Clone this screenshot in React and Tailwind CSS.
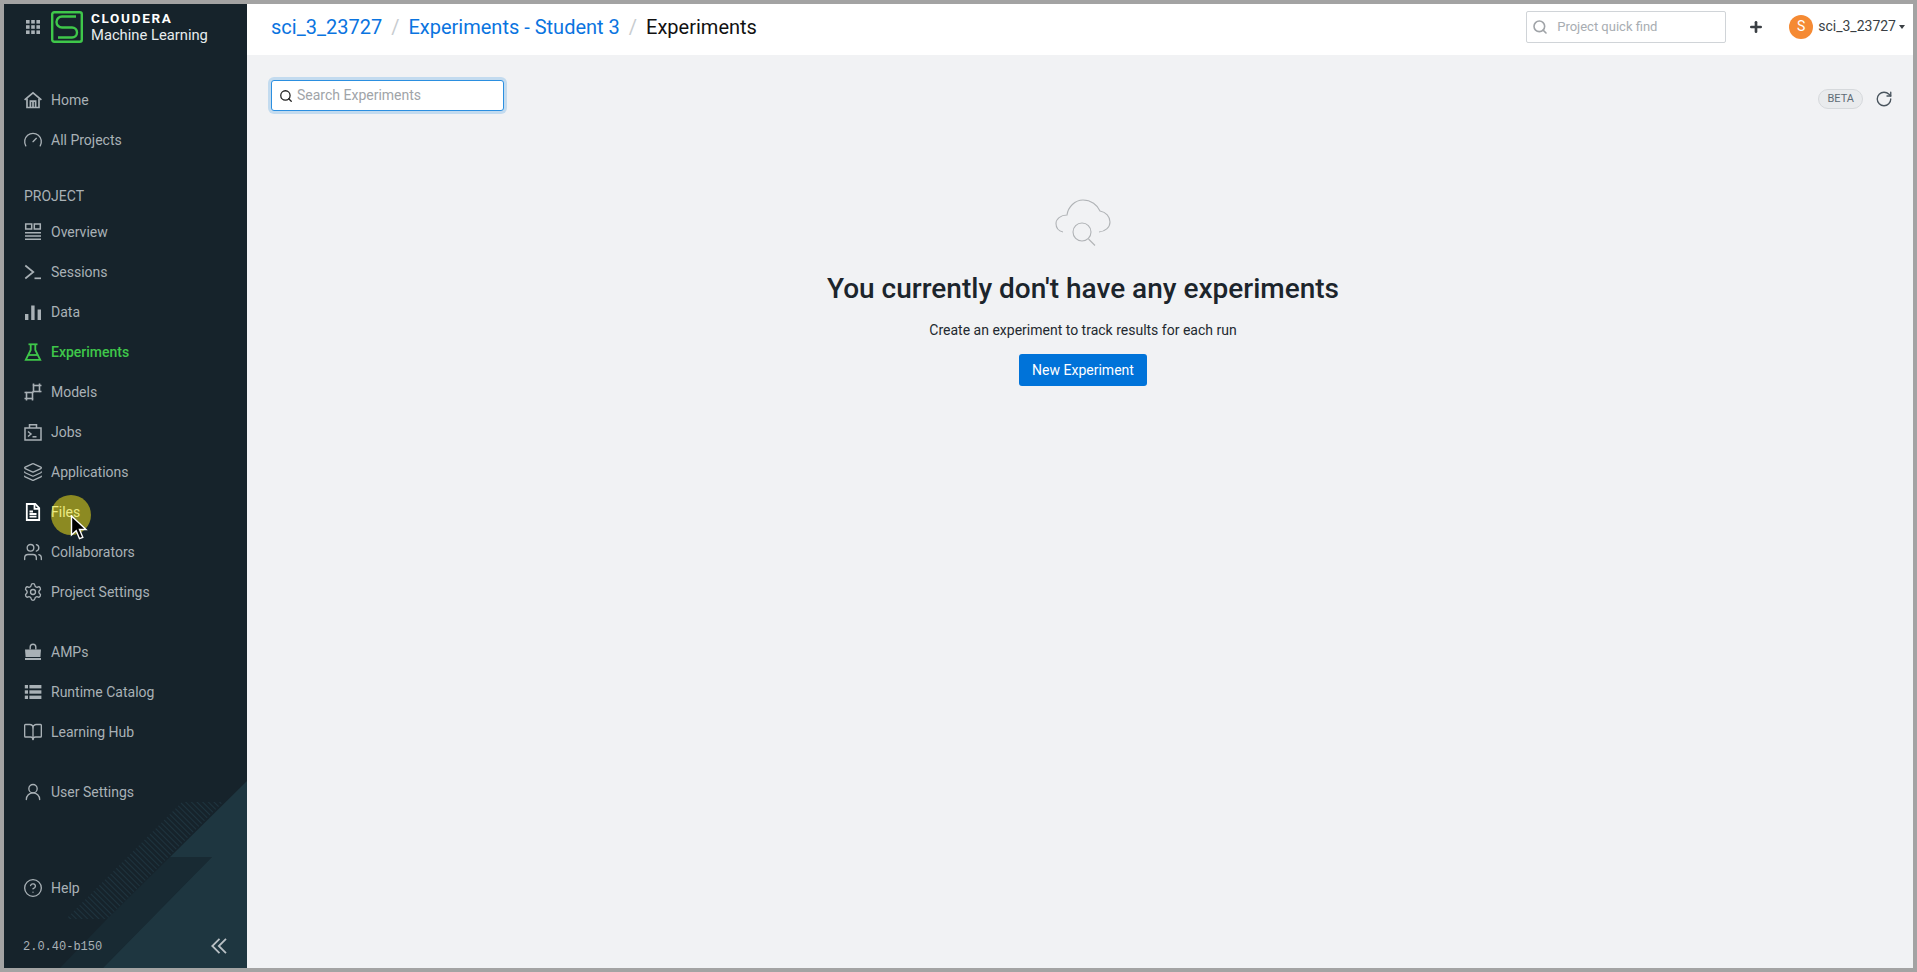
import { Search, Plus, RotateCw, Settings, CircleHelp, Gauge, UserRound, Users, BookOpen, Layers } from 'lucide-react'

// Line icons that lucide has no close match for
function Ico({ children, fill = 'none', sw = 1.7 }) {
  return (
    <svg className="shrink-0" width="18" height="18" viewBox="0 0 18 18" fill={fill} stroke={fill === 'none' ? 'currentColor' : 'none'} strokeWidth={sw}>
      {children}
    </svg>
  )
}

const HomeIcon = () => (
  <Ico><path d="M.6 8.8 9 1.800l8.400 7" /><path d="M3 7.500V16.500h12V7.500" /><path d="M6.400 16.500v-6.300h5.200v6.300" /><path d="M9 10.200v6.300" /></Ico>
)
const OverviewIcon = () => (
  <Ico sw={1.5}><rect x="1.700" y="1" width="6" height="5" /><rect x="10.300" y="1" width="6" height="5" /><path d="M1 9.800h16M1 13h16M1 16.200h16" /></Ico>
)
const SessionsIcon = () => (
  <Ico><path d="m1.300 2.500 8 6.500-8 6.500" /><path d="M10.500 15.300H17" /></Ico>
)
const DataIcon = () => (
  <Ico fill="currentColor"><rect x="1" y="11" width="3.400" height="6" /><rect x="7.200" y="2.500" width="3.400" height="14.500" /><rect x="13.600" y="6.500" width="3.400" height="10.500" /></Ico>
)
const FlaskIcon = () => (
  <Ico sw={1.800}><path d="M4.500 1.300h9" /><path d="M6.700 1.300v5.700L1.800 16.800h14.400L11.300 7V1.300" /><path d="M4.300 12h9.400" /></Ico>
)
const ModelsIcon = () => (
  <Ico sw={1.600}>
    <rect x="2.500" y="9.500" width="6" height="6" /><rect x="9.500" y="2.500" width="6" height="6" />
    <path d="M8.500 9.500 9.500 8.500M.5 9.500h2M.5 15.500h2M2.500 17.500v-2M8.500 17.500v-2M9.500 .5v2M15.500 .5v2M15.500 8.500h2M15.500 2.500h2" />
  </Ico>
)
const JobsIcon = () => (
  <Ico sw={1.500}><rect x="1" y="5" width="16" height="12" /><path d="M5.500 5V1.800h7V5" /><path d="m4 8.500 3 2.500-3 2.500" /><path d="M8.500 13.800h4" /></Ico>
)
const FilesIcon = () => (
  <svg className="shrink-0" width="18" height="18" viewBox="0 0 18 18" fill="none" stroke="#fff" strokeWidth="1.800">
    <path d="M2.800 1h8.400l4 4.200V17H2.800z" /><path d="M10.500 1v4.800h4.700" /><path d="M5.500 8.500h3.500M5.500 11h7M5.500 13.700h7" />
  </svg>
)
const AmpsIcon = () => (
  <Ico fill="currentColor">
    <path d="M1 6.500h16l-.6 7.500H1.600z" /><rect x="1" y="15" width="16" height="2" />
    <path d="M5.500 6.500V4a3.500 3.500 0 0 1 7 0v2.500h-1.400V4a2.100 2.100 0 0 0-4.200 0v2.500z" />
  </Ico>
)
const CatalogIcon = () => (
  <Ico fill="currentColor">
    <rect x="0.800" y="2" width="3.200" height="3.400" /><rect x="5.400" y="2" width="12" height="3.400" />
    <rect x="0.800" y="7.300" width="3.200" height="3.400" /><rect x="5.400" y="7.300" width="12" height="3.400" />
    <rect x="0.800" y="12.600" width="3.200" height="3.400" /><rect x="5.400" y="12.600" width="12" height="3.400" />
  </Ico>
)

const lucideProps = { size: 20, strokeWidth: 1.600, className: 'shrink-0' }

function NavItem({ icon, label, active, labelClass }) {
  return (
    <div className={`h-10 flex items-center pl-[20px] text-[14px] ${active ? 'text-[#3fc74a] font-medium' : 'text-[#a9b1b6]'}`}>
      <span className="w-[18px] h-[18px] flex items-center justify-center shrink-0">{icon}</span>
      <span className={`ml-[9px] ${labelClass || ''}`}>{label}</span>
    </div>
  )
}

function Sidebar() {
  return (
    <aside className="relative w-[243px] shrink-0 bg-[#16232b] flex flex-col overflow-hidden">
      {/* Hintergrund-Grafik unten rechts */}
      <svg className="absolute left-0 bottom-0" width="243" height="190" viewBox="0 0 243 190">
        <defs>
          <pattern id="stripes" width="4" height="4" patternUnits="userSpaceOnUse" patternTransform="rotate(45)">
            <rect width="4" height="0.900" fill="#1f3540" />
          </pattern>
        </defs>
        <polygon points="56,190 103,141 166,79 208,79 99,190" fill="#182a33" />
        <polygon points="243,3 166,79 208,79 99,190 243,190" fill="#1e3640" />
        <polygon points="62,141 103,141 219,24 178,24" fill="url(#stripes)" />
      </svg>

      {/* Mauszeiger-Hervorhebung aus der Aufnahme */}
      <div className="absolute left-[47px] top-[491px] w-10 h-10 rounded-full bg-[#8c8a22]" />

      <div className="relative flex flex-col flex-1">
        <div className="h-[46px] flex items-center pl-[22px] mb-[30px]">
          <svg className="shrink-0" width="14" height="14" viewBox="0 0 14 14" fill="#a9b1b6">
            <rect x="0" y="0" width="3.600" height="3.600" /><rect x="5.200" y="0" width="3.600" height="3.600" /><rect x="10.400" y="0" width="3.600" height="3.600" />
            <rect x="0" y="5.200" width="3.600" height="3.600" /><rect x="5.200" y="5.200" width="3.600" height="3.600" /><rect x="10.400" y="5.200" width="3.600" height="3.600" />
            <rect x="0" y="10.400" width="3.600" height="3.600" /><rect x="5.200" y="10.400" width="3.600" height="3.600" /><rect x="10.400" y="10.400" width="3.600" height="3.600" />
          </svg>
          <svg className="ml-[11px] shrink-0" width="32" height="32" viewBox="0 0 32 32" fill="none" stroke="#3fc74a" strokeWidth="2.400">
            <rect x="1.200" y="1.200" width="29.600" height="29.600" rx="2" />
            <path d="M25 5.500H11a5.500 5.500 0 0 0 0 11h10a5 5 0 0 1 0 10H7" />
          </svg>
          <div className="ml-[8px] flex flex-col text-white leading-none mt-[1px]">
            <span className="text-[13.500px] font-bold tracking-[1.700px] h-[15px]">CLOUDERA</span>
            <span className="text-[14.750px] mt-[1px] text-[#e8ecee]">Machine Learning</span>
          </div>
        </div>

        <NavItem label="Home" icon={<HomeIcon />} />
        <NavItem label="All Projects" icon={<Gauge {...lucideProps} />} />

        <div className="h-[52px] pt-[20px] pl-[20px] flex items-center text-[14px] text-[#a9b1b6]">PROJECT</div>

        <NavItem label="Overview" icon={<OverviewIcon />} />
        <NavItem label="Sessions" icon={<SessionsIcon />} />
        <NavItem label="Data" icon={<DataIcon />} />
        <NavItem label="Experiments" active icon={<FlaskIcon />} />
        <NavItem label="Models" icon={<ModelsIcon />} />
        <NavItem label="Jobs" icon={<JobsIcon />} />
        <NavItem label="Applications" icon={<Layers {...lucideProps} />} />
        <NavItem label="Files" labelClass="text-[#ecea82]" icon={<FilesIcon />} />
        <NavItem label="Collaborators" icon={<Users {...lucideProps} />} />
        <NavItem label="Project Settings" icon={<Settings {...lucideProps} />} />

        <div className="mt-5">
          <NavItem label="AMPs" icon={<AmpsIcon />} />
          <NavItem label="Runtime Catalog" icon={<CatalogIcon />} />
          <NavItem label="Learning Hub" icon={<BookOpen {...lucideProps} />} />
        </div>

        <div className="mt-5">
          <NavItem label="User Settings" icon={<UserRound {...lucideProps} />} />
        </div>

        <div className="mt-14">
          <NavItem label="Help" icon={<CircleHelp {...lucideProps} />} />
        </div>

        <div className="mt-4 h-[44px] flex items-center justify-between pl-[19px] pr-[20px]">
          <span className="text-[12px] text-[#a9b1b6] mt-[2px] font-['Liberation_Mono',monospace]">2.0.40-b150</span>
          <svg width="16" height="16" viewBox="0 0 16 16" fill="none" stroke="#b9c0c4" strokeWidth="1.800">
            <path d="M8.500.8 1.300 8l7.200 7.200M15 .8 7.800 8l7.200 7.200" />
          </svg>
        </div>
      </div>

      <svg className="absolute left-[66px] top-[511px]" width="18" height="26" viewBox="0 0 18 26">
        <path d="M1.500 1v19l4.700-4.300 3.300 8 3.300-1.400-3.300-7.800h6.500z" fill="#000" stroke="#fff" strokeWidth="1.400" />
      </svg>
    </aside>
  )
}

function Header() {
  return (
    <header className="h-[51px] shrink-0 bg-white flex items-center pl-[24px] pr-[8px] pb-[6px]">
      <nav className="flex items-center text-[20px]">
        <span className="text-[#0a74e0]">sci_3_23727</span>
        <span className="text-[#c8ccd0] mx-[9px]">/</span>
        <span className="text-[#0a74e0]">Experiments - Student 3</span>
        <span className="text-[#c8ccd0] mx-[9px]">/</span>
        <span className="text-[#111]">Experiments</span>
      </nav>
      <div className="ml-auto flex items-center">
        <div className="w-[200px] h-[32px] border border-[#d0d4d8] rounded-[2px] flex items-center pl-[5px]">
          <Search size={16} strokeWidth={2.400} className="text-[#a0a4a8]" />
          <span className="ml-[9px] text-[13px] text-[#a8adb2]">Project quick find</span>
        </div>
        <Plus size={16} strokeWidth={4} className="ml-[22px] text-[#3a3f44]" />
        <div className="ml-[25px] w-6 h-6 rounded-full bg-[#f58a33] text-white text-[14px] flex items-center justify-center">S</div>
        <span className="ml-[5px] text-[14px] text-[#3a3f44]">sci_3_23727</span>
        <span className="ml-[3px] w-0 h-0 border-x-[3.500px] border-x-transparent border-t-[4px] border-t-[#3a3f44]" />
      </div>
    </header>
  )
}

export default function App() {
  return (
    <div className="w-[1917px] h-[972px] p-1 bg-[#a3a3a3] flex font-['Roboto',sans-serif] overflow-hidden">
      <Sidebar />
      <main className="flex-1 min-w-0 bg-[#f1f2f4] flex flex-col">
        <Header />
        <div className="pl-[24px] pr-[20px] pt-[25px] flex flex-col flex-1">
          <div className="flex items-start justify-between">
            <div className="w-[233px] h-[31px] bg-white border border-[#2b8fe0] rounded-[3px] ring-[3px] ring-[#c3dbef] flex items-center pl-[7px]">
              <Search size={14} strokeWidth={2.200} className="text-[#222]" />
              <span className="ml-[4px] text-[14px] text-[#a0a4a8]">Search Experiments</span>
            </div>
            <div className="flex items-center mt-[9px]">
              <span className="h-[20px] px-[8px] rounded-full border border-[#d6d9dc] bg-[#e9ebed] text-[11px] text-[#5f6b75] flex items-center">BETA</span>
              <RotateCw size={18} strokeWidth={1.800} className="ml-[12px] text-[#4a555e]" />
            </div>
          </div>

          <div className="flex flex-col items-center mt-[88px] ml-[2px]">
            <svg width="56" height="48" viewBox="0 0 56 48" fill="none" stroke="#b0b3b6" strokeWidth="1.100">
              <path d="M8 33C3.500 32 1 28.500 1 24.500 1 20 5.500 16 12 16 13 8 20 1 28 1c8 0 14.500 5 17 11 6 1 10 5.500 10 11 0 5.500-5 9.500-11 10" />
              <circle cx="27" cy="33" r="9" />
              <path d="m33.500 40 6.500 6.500" />
            </svg>
            <h1 className="mt-[25px] text-[28px] leading-[34px] font-medium text-[#1c252c]">You currently don't have any experiments</h1>
            <p className="mt-[14px] text-[14px] leading-[20px] text-[#23292f]">Create an experiment to track results for each run</p>
            <button className="mt-[14px] w-[128px] h-[32px] bg-[#0073d9] rounded-[3px] text-white text-[14px]">New Experiment</button>
          </div>
        </div>
      </main>
    </div>
  )
}
